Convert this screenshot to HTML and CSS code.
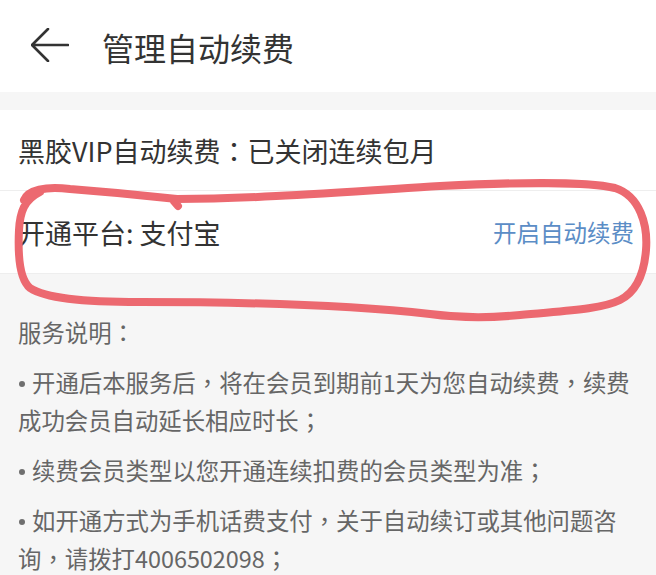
FILE: index.html
```html
<!DOCTYPE html>
<html lang="zh-CN">
<head>
<meta charset="utf-8">
<title>管理自动续费</title>
<link rel="stylesheet" href="styles.css">
</head>
<body>
  <header class="topbar">
    <svg class="back" width="38" height="34" viewBox="0 0 38 34" aria-hidden="true">
      <path d="M17 1 L1 17 L17 33 M1 17 H37" fill="none" stroke="#333" stroke-width="2.6" stroke-linecap="round" stroke-linejoin="round"/>
    </svg>
    <h1 class="title">管理自动续费</h1>
  </header>

  <section class="card">
    <div class="row row-status"><span>黑胶VIP自动续费<span class="p" lang="zh-Hant">：</span>已关闭连续包月</span></div>
    <div class="row row-platform">
      <span>开通平台: 支付宝</span>
      <a class="link">开启自动续费</a>
    </div>
  </section>

  <section class="notes">
    <p class="note">服务说明<span class="p" lang="zh-Hant">：</span></p>
    <p class="note"><span class="dot"></span>开通后本服务后<span class="p" lang="zh-Hant">，</span>将在会员到期前1天为您自动续费<span class="p" lang="zh-Hant">，</span>续费成功会员自动延长相应时长<span class="p" lang="zh-Hant">；</span></p>
    <p class="note"><span class="dot"></span>续费会员类型以您开通连续扣费的会员类型为准<span class="p" lang="zh-Hant">；</span></p>
    <p class="note"><span class="dot"></span>如开通方式为手机话费支付<span class="p" lang="zh-Hant">，</span>关于自动续订或其他问题咨询<span class="p" lang="zh-Hant">，</span>请拨打4006502098<span class="p" lang="zh-Hant">；</span></p>
  </section>

  <svg class="scribble" width="656" height="575" viewBox="0 0 656 575" aria-hidden="true">
    <path d="M24 200 C28 190 45 186 70 189 C110 192 150 196 177 199 C250 199 330 193 440 186 C520 182 590 182 615 188 C640 196 648 225 646 250 C644 275 636 292 620 300 C600 310 560 311 520 315 C490 318 460 318 430 314 C350 305 250 302 140 302 C80 302 45 298 30 288 C18 278 18 250 19 230 C20 212 24 200 40 192 M172 199 L178 206" fill="none" stroke="#ec6970" stroke-width="8" stroke-linecap="round" stroke-linejoin="round"/>
  </svg>
</body>
</html>
```

FILE: styles.css
```css
html, body {
  margin: 0;
  padding: 0;
}
body {
  width: 656px;
  height: 575px;
  overflow: hidden;
  position: relative;
  background: #f6f6f6;
  font-family: "Noto Sans CJK SC", "Noto Sans", sans-serif;
  color: #333;
}
.topbar {
  height: 92px;
  background: #fff;
  display: flex;
  align-items: center;
  padding-left: 31px;
  gap: 33px;
}
.back {
  display: block;
  margin-top: -3px;
}
.title {
  margin: 0;
  font-size: 32px;
  font-weight: 400;
  color: #333;
  line-height: 1;
  margin-top: 2px;
}
.card {
  margin-top: 18px;
  background: #fff;
  border-bottom: 1px solid #eeeeee;
}
.row {
  display: flex;
  align-items: center;
  justify-content: space-between;
  padding: 0 22px 0 18px;
  font-size: 27px;
  color: #333;
}
.row-status {
  height: 80px;
  border-bottom: 1px solid #eeeeee;
}
.row-platform {
  height: 82px;
}
.link {
  font-size: 23.5px;
  color: #5b8dc6;
  text-decoration: none;
}
.p {
  font-family: "Noto Sans CJK TC", "Noto Sans CJK SC", sans-serif;
}
.notes {
  padding: 39px 20px 0 18px;
}
.note {
  margin: 0 0 12px 0;
  font-size: 23.4px;
  line-height: 38px;
  color: #666;
}
.dot {
  display: inline-block;
  width: 6px;
  height: 6px;
  border-radius: 50%;
  background: #6f6f6f;
  margin: 0 7px 0 1px;
  vertical-align: middle;
  position: relative;
  top: -2px;
}
.scribble {
  position: absolute;
  left: 0;
  top: 0;
  pointer-events: none;
}
```
